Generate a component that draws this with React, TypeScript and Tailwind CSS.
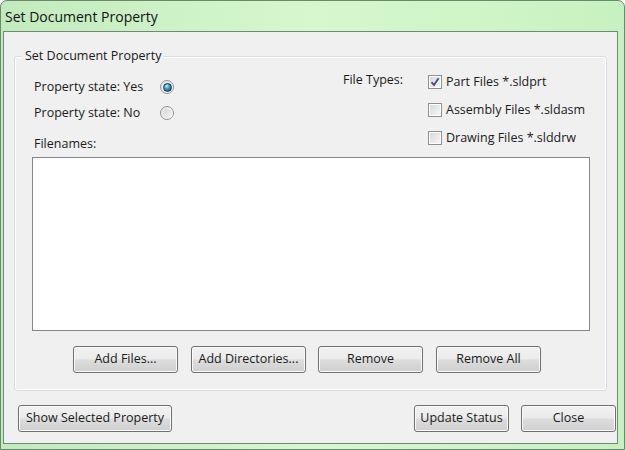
import React from "react";

const font = { fontFamily: '"Open Sans", "Noto Sans", sans-serif' };

function Btn({ w, children }: { w: string; children: React.ReactNode }) {
  return (
    <div
      className={`${w} h-[27px] flex items-center justify-center rounded-[3px] border border-[#707070] bg-[linear-gradient(to_bottom,#f2f2f2_0%,#ebebeb_48%,#dddddd_52%,#cfcfcf_100%)] shadow-[inset_0_0_0_1px_#fbfbfb] text-[12.5px] text-[#1a1a1a]`}
    >
      {children}
    </div>
  );
}

function Radio({ checked }: { checked?: boolean }) {
  return (
    <div className="w-[14px] h-[14px] rounded-full border border-[#929292] bg-[linear-gradient(135deg,#e2e2e2,#ffffff)] flex items-center justify-center">
      {checked ? (
        <div className="w-[9px] h-[9px] rounded-full border border-[#18344d] bg-[radial-gradient(circle_at_40%_30%,#bff0ff_0%,#3a9fd0_40%,#0a4470_100%)]" />
      ) : (
        <div className="w-[9px] h-[9px] rounded-full bg-[linear-gradient(135deg,#d6d6d6,#f4f4f4)]" />
      )}
    </div>
  );
}

function Check({ checked }: { checked?: boolean }) {
  return (
    <div className="w-[14px] h-[14px] border border-[#8e8f8f] bg-white p-[1px]">
      <div className="w-full h-full bg-[linear-gradient(135deg,#d9d9d9,#f6f6f6)] flex items-center justify-center">
        {checked && (
          <svg width="10" height="10" viewBox="0 0 10 10">
            <path d="M1.5 5.2 L4 8 L8.6 1.2" fill="none" stroke="#3b4f8c" strokeWidth="1.8" />
          </svg>
        )}
      </div>
    </div>
  );
}

export default function App() {
  return (
    <div
      style={font}
      className="w-[625px] h-[450px] flex flex-col rounded-t-[7px] border border-[#6b8a6b] bg-linear-to-r from-[#c2ebbd] via-[#d6f8cf] to-[#c8f1c1] overflow-hidden"
    >
      <div className="h-[30px] flex items-center pl-[4px] text-[14px] text-[#111]">Set Document Property</div>
      <div className="flex-1 flex pl-[2px] pr-[6px] pb-[5px]">
        <div className="flex-1 flex flex-col border border-[#6f8a72] bg-[#f0f0f0] text-[12.5px] text-[#1a1a1a]">
          <div className="mt-[24px] mx-[10px] h-[335px] relative rounded-[3px] border border-[#d5dfe5] shadow-[inset_0_0_0_1px_#ffffff] flex flex-col">
            <span className="absolute -top-[10px] left-[7px] px-[3px] bg-[#f0f0f0] leading-[18px]">Set Document Property</span>
            <div className="flex h-[100px]">
              <div className="w-[328px] pl-[19px] pt-[21px] flex flex-col">
                <div className="h-[18px] flex items-center">
                  <span className="w-[126px]">Property state: Yes</span>
                  <Radio checked />
                </div>
                <div className="h-[18px] mt-[8px] flex items-center">
                  <span className="w-[126px]">Property state: No</span>
                  <Radio />
                </div>
                <div className="h-[18px] mt-[13px] flex items-center">Filenames:</div>
              </div>
              <div className="flex">
                <div className="w-[85px] pt-[14px]">
                  <div className="h-[18px] flex items-center">File Types:</div>
                </div>
                <div className="pt-[16px] flex flex-col gap-[10px]">
                  <div className="h-[18px] flex items-center gap-[4px]">
                    <Check checked />
                    <span>Part Files *.sldprt</span>
                  </div>
                  <div className="h-[18px] flex items-center gap-[4px]">
                    <Check />
                    <span>Assembly Files *.sldasm</span>
                  </div>
                  <div className="h-[18px] flex items-center gap-[4px]">
                    <Check />
                    <span>Drawing Files *.slddrw</span>
                  </div>
                </div>
              </div>
            </div>
            <div className="ml-[17px] w-[558px] h-[174px] border border-[#828790] bg-white" />
            <div className="mt-[15px] ml-[58px] flex">
              <Btn w="w-[105px]">Add Files...</Btn>
              <div className="w-[13px]" />
              <Btn w="w-[115px]">Add Directories...</Btn>
              <div className="w-[12px]" />
              <Btn w="w-[105px]">Remove</Btn>
              <div className="w-[13px]" />
              <Btn w="w-[105px]">Remove All</Btn>
            </div>
          </div>
          <div className="mt-[14px] flex pl-[14px] pr-[1px]">
            <Btn w="w-[154px]">Show Selected Property</Btn>
            <div className="flex-1" />
            <Btn w="w-[95px]">Update Status</Btn>
            <div className="w-[12px]" />
            <Btn w="w-[95px]">Close</Btn>
          </div>
        </div>
      </div>
    </div>
  );
}
